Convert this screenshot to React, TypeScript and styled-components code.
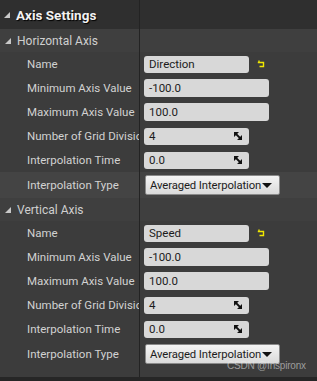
import * as React from 'react';
import styled, { createGlobalStyle } from 'styled-components';

const GlobalStyle = createGlobalStyle`
  html, body {
    margin: 0;
    padding: 0;
    background: #3c3c3c;
  }
  body {
    font-family: Roboto, "Liberation Sans", sans-serif;
  }
`;

// --- Styled Components ---

const Panel = styled.div`
  position: relative;
  width: 317px;
  height: 381px;
  display: flex;
  flex-direction: column;
  background: #3c3c3c;
  overflow: hidden;
  border-bottom: 4px solid #262626;
  box-sizing: border-box;
`;

const Row = styled.div<{ $height: number; $bg?: string }>`
  display: grid;
  grid-template-columns: 140px 1fr;
  height: ${p => p.$height}px;
  background: ${p => p.$bg || 'transparent'};
  flex-shrink: 0;
`;

const LeftCell = styled.div<{ $indent: number }>`
  display: flex;
  align-items: center;
  padding-left: ${p => p.$indent}px;
  border-right: 1px solid #232323;
  overflow: hidden;
  white-space: nowrap;
`;

const RightCell = styled.div`
  display: flex;
  align-items: center;
  padding-left: 4px;
  gap: 8px;
`;

const Filler = styled.div`
  flex: 1;
  display: grid;
  grid-template-columns: 140px 1fr;
`;

const Triangle = styled.span`
  width: 0;
  height: 0;
  border-left: 6px solid transparent;
  border-bottom: 6px solid #c8c8c8;
  margin-right: 6px;
  margin-top: 1px;
`;

const HeaderTitle = styled.span`
  font-size: 13.5px;
  font-weight: 700;
  color: #f2f2f2;
  text-shadow: 1px 1px 1px #000;
`;

const CategoryTitle = styled.span`
  font-size: 12px;
  color: #cfcfcf;
`;

const Label = styled.span`
  font-size: 11.5px;
  color: #d2d2d2;
`;

const TextBox = styled.div<{ $width: number; $height?: number }>`
  width: ${p => p.$width}px;
  height: ${p => p.$height || 17}px;
  box-sizing: border-box;
  background: #d8d8d8;
  border-radius: 3px;
  display: flex;
  align-items: center;
  justify-content: space-between;
  padding: 0 7px 0 5px;
  font-size: 11.5px;
  color: #1c1c1c;
`;

const Dropdown = styled.div`
  width: 135px;
  height: 20px;
  box-sizing: border-box;
  margin-left: 1px;
  background: linear-gradient(#f4f4f4, #dadada);
  border: 1px solid #8a8a8a;
  border-radius: 2px;
  display: flex;
  align-items: center;
  padding-left: 4px;
  font-size: 11.3px;
  letter-spacing: -0.1px;
  color: #1c1c1c;
  white-space: nowrap;
  overflow: hidden;
`;

const Caret = styled.span`
  flex-shrink: 0;
  width: 0;
  height: 0;
  border-left: 5px solid transparent;
  border-right: 5px solid transparent;
  border-top: 5px solid #111;
  margin-left: 1px;
`;

const Watermark = styled.div`
  position: absolute;
  left: 227px;
  top: 360px;
  font-family: "Liberation Sans", Arial, sans-serif;
  font-size: 10px;
  color: rgba(235, 235, 235, 0.55);
  letter-spacing: -0.2px;
`;

const ResetIcon = () => (
  <svg width="9" height="8" viewBox="0 0 9 8">
    <path d="M2 0.5 V3 M0.8 2.5 H6.5 V6.5 H2.5" stroke="#f0e800" strokeWidth="1.4" fill="none" />
  </svg>
);

const SpinIcon = () => (
  <svg width="8" height="8" viewBox="0 0 8 8">
    <path d="M0 0 H5 L0 5 Z M8 8 H3 L8 3 Z" fill="#111" />
    <path d="M1.5 1.5 L6.5 6.5" stroke="#111" strokeWidth="1.8" />
  </svg>
);

type Prop = { label: string; value: string; kind: 'name' | 'num' | 'spin' | 'enum' };

const props = (name: string): Prop[] => [
  { label: 'Name', value: name, kind: 'name' },
  { label: 'Minimum Axis Value', value: '-100.0', kind: 'num' },
  { label: 'Maximum Axis Value', value: '100.0', kind: 'num' },
  { label: 'Number of Grid Divisions', value: '4', kind: 'spin' },
  { label: 'Interpolation Time', value: '0.0', kind: 'spin' },
  { label: 'Interpolation Type', value: 'Averaged Interpolation', kind: 'enum' },
];

function ValueWidget({ p }: { p: Prop }) {
  if (p.kind === 'name') {
    return (
      <>
        <TextBox $width={105}>{p.value}</TextBox>
        <ResetIcon />
      </>
    );
  }
  if (p.kind === 'num') return <TextBox $width={125} $height={18}>{p.value}</TextBox>;
  if (p.kind === 'spin') {
    return (
      <TextBox $width={105}>
        {p.value}
        <SpinIcon />
      </TextBox>
    );
  }
  return (
    <Dropdown>
      {p.value}
      <Caret />
    </Dropdown>
  );
}

function Section({ title, name, highlightLast }: { title: string; name: string; highlightLast?: boolean }) {
  const items = props(name);
  return (
    <>
      <Row $height={23} $bg="#3f3f3f">
        <LeftCell $indent={5}>
          <Triangle />
          <CategoryTitle>{title}</CategoryTitle>
        </LeftCell>
        <RightCell />
      </Row>
      {items.map((p, i) => (
        <Row
          key={p.label}
          $height={p.kind === 'enum' ? 26 : 24}
          $bg={highlightLast && i === items.length - 1 ? '#444444' : undefined}
        >
          <LeftCell $indent={27}>
            <Label>{p.label}</Label>
          </LeftCell>
          <RightCell>
            <ValueWidget p={p} />
          </RightCell>
        </Row>
      ))}
    </>
  );
}

export default function App() {
  return (
    <>
      <GlobalStyle />
      <Panel>
        <Row $height={29} $bg="#2f2f2f">
          <LeftCell $indent={4}>
            <Triangle />
            <HeaderTitle>Axis Settings</HeaderTitle>
          </LeftCell>
          <RightCell />
        </Row>
        <Section title="Horizontal Axis" name="Direction" highlightLast />
        <Section title="Vertical Axis" name="Speed" />
        <Filler>
          <LeftCell $indent={0} />
          <div />
        </Filler>
        <Watermark>CSDN @Inspironx</Watermark>
      </Panel>
    </>
  );
}
